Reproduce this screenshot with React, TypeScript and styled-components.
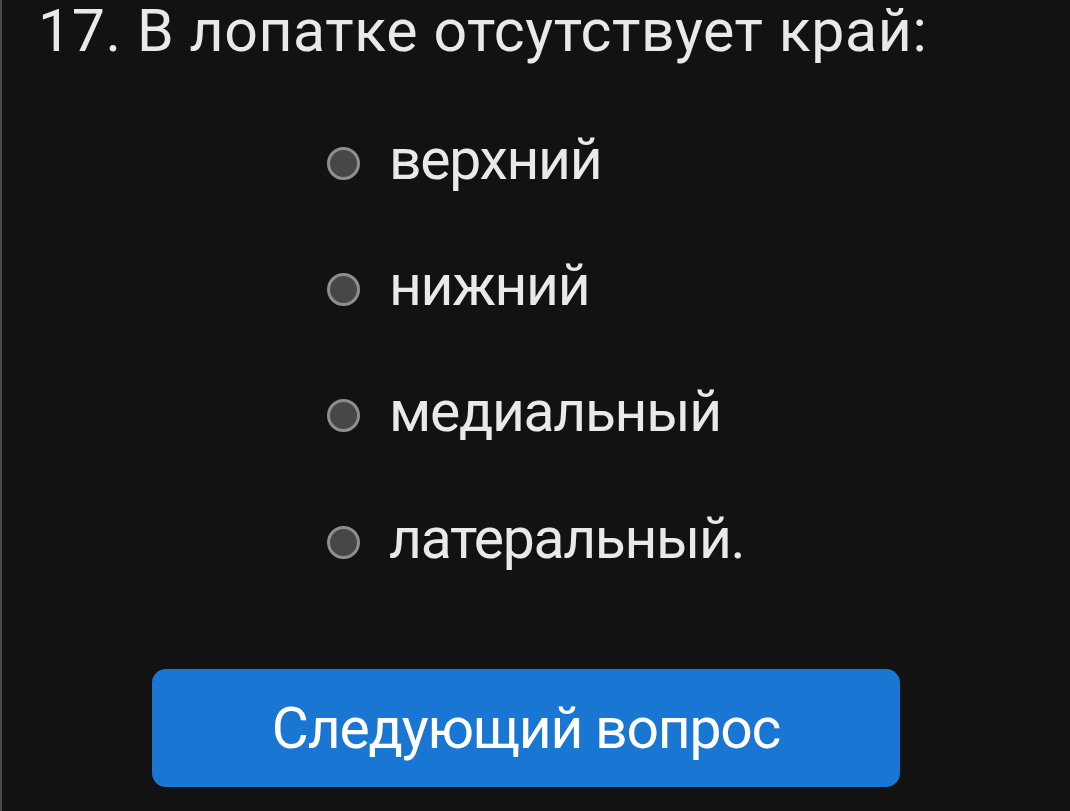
import React from "react";
import styled, { createGlobalStyle } from "styled-components";

const GlobalStyle = createGlobalStyle`
  html, body {
    margin: 0;
    padding: 0;
    background: #121212;
  }
  body {
    font-family: Roboto, "Noto Sans", sans-serif;
  }
`;

const Page = styled.div`
  min-height: 811px;
  box-sizing: border-box;
  border-left: 2px solid #4a4a4a;
  background: #121212;
  color: #e9e9e9;
  padding: 0 0 0 36px;
  display: flex;
  flex-direction: column;
`;

const Title = styled.h1`
  margin: 0;
  font-size: 59px;
  font-weight: 400;
  letter-spacing: 0.6px;
  line-height: 62px;
  color: #e9e9e9;
`;

const Options = styled.div`
  display: flex;
  flex-direction: column;
  margin: 38px 0 0 289px;
`;

const Option = styled.label`
  display: flex;
  align-items: center;
  gap: 29px;
  height: 126.3px;
  font-size: 57px;
  letter-spacing: -1.3px;
  cursor: pointer;
`;

const Radio = styled.span`
  width: 33px;
  height: 33px;
  box-sizing: border-box;
  border-radius: 50%;
  border: 3px solid #8e8e8e;
  background: #474747;
  flex-shrink: 0;
`;

const OptionText = styled.span`
  line-height: 70px;
  margin-bottom: 7px;
`;

const NextButton = styled.button`
  margin: 64px 0 0 114px;
  width: 748px;
  height: 118px;
  border: none;
  border-radius: 14px;
  background: #1976d2;
  color: #ffffff;
  font-family: Roboto, "Noto Sans", sans-serif;
  font-size: 57px;
  font-weight: 400;
  letter-spacing: -1.2px;
  cursor: pointer;
`;

const answers = ["верхний", "нижний", "медиальный", "латеральный."];

const App = () => {
  return (
    <>
      <GlobalStyle />
      <Page>
        <Title>17. В лопатке отсутствует край:</Title>
        <Options>
          {answers.map((a) => (
            <Option key={a}>
              <Radio />
              <OptionText>{a}</OptionText>
            </Option>
          ))}
        </Options>
        <NextButton type="button">Следующий вопрос</NextButton>
      </Page>
    </>
  );
};

export default App;
